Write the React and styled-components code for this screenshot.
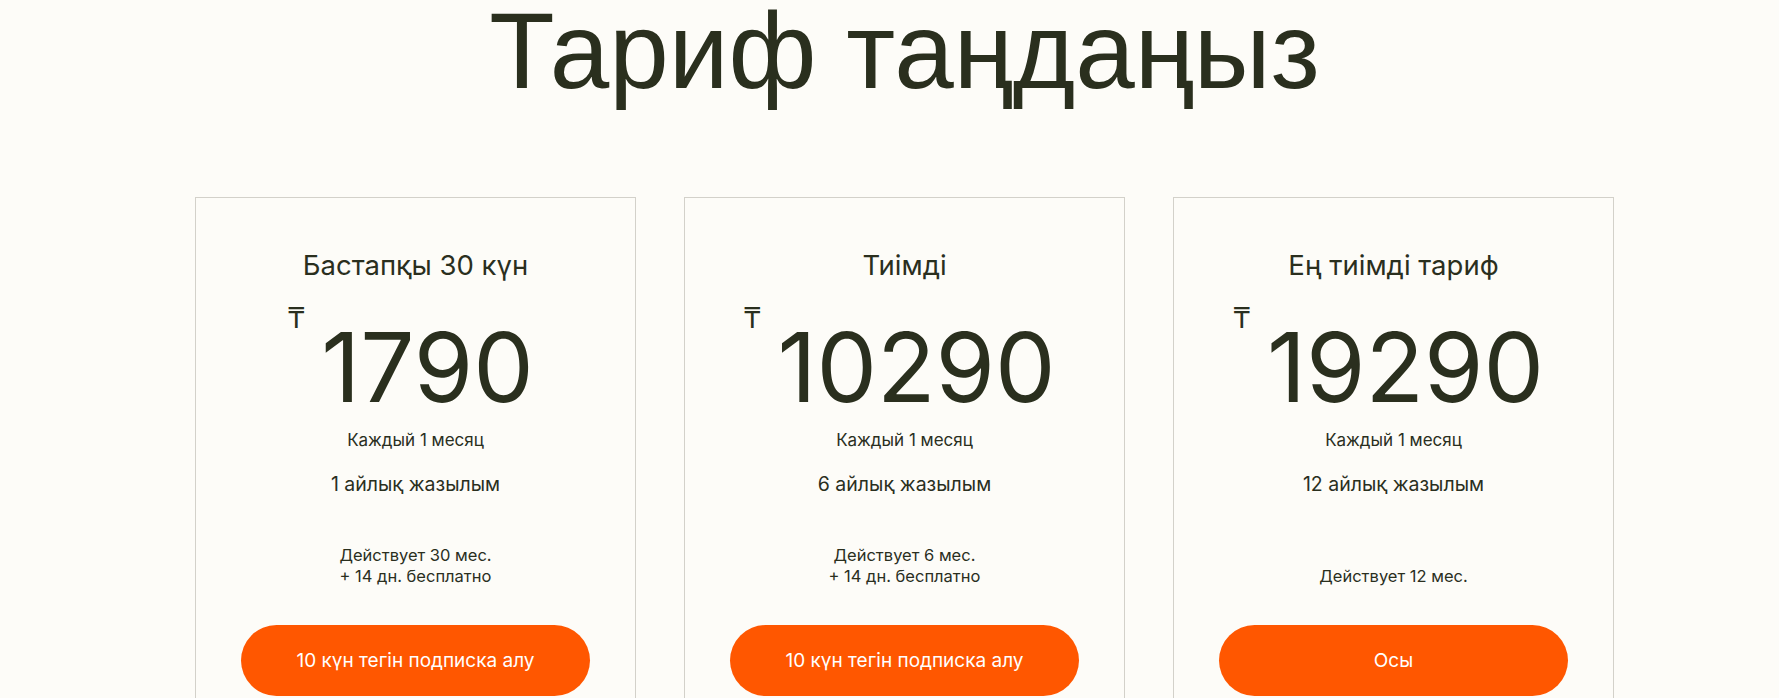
import React from 'react';
import styled, { createGlobalStyle } from 'styled-components';

const GlobalStyle = createGlobalStyle`
    html, body {
        margin: 0;
        padding: 0;
        background: #fdfcf8;
    }
    body {
        font-family: Inter, "Noto Sans", sans-serif;
        color: #2a2f1e;
        overflow: hidden;
    }
`;

const Page = styled.section`
    display: flex;
    flex-direction: column;
    align-items: center;
    height: 698px;
    padding-left: 30px;
    box-sizing: border-box;
    overflow: hidden;
`;

const Heading = styled.h1`
    margin: -14px 0 0;
    font-family: "Liberation Sans", Arial, sans-serif;
    font-weight: 400;
    font-size: 107px;
    line-height: 130px;
    color: #2a2f1e;
`;

const CardRow = styled.div`
    display: grid;
    grid-template-columns: repeat(3, 441px);
    gap: 48px;
    margin-top: 81px;
`;

const Card = styled.article`
    display: flex;
    flex-direction: column;
    align-items: center;
    border: 1px solid #d3d1ca;
    padding: 49px 0 40px;
    text-align: center;
`;

const PlanName = styled.h2`
    margin: 0;
    font-size: 27.5px;
    font-weight: 400;
    line-height: 36px;
`;

const PriceRow = styled.div`
    display: flex;
    align-items: flex-start;
    margin-top: 21px;
    margin-left: -10px;
`;

const Currency = styled.span`
    font-size: 28px;
    line-height: 28px;
    margin-right: 16px;
`;

const Amount = styled.span`
    font-size: 96px;
    line-height: 96px;
    margin-top: 15px;
`;

const Period = styled.p`
    margin: 13px 0 0;
    font-size: 17px;
    line-height: 24px;
`;

const Duration = styled.p`
    margin: 19px 0 0;
    font-size: 19.5px;
    line-height: 26px;
`;

const Notes = styled.div`
    display: flex;
    flex-direction: column;
    justify-content: flex-end;
    height: 42px;
    margin-top: 47.5px;
    font-size: 16.5px;
    line-height: 21px;
`;

const ActionButton = styled.button`
    margin-top: 38.5px;
    width: 349px;
    height: 71px;
    border: none;
    border-radius: 36px;
    background: #ff5700;
    color: #ffffff;
    font-family: Inter, "Noto Sans", sans-serif;
    font-size: 19px;
    cursor: pointer;
`;

const plans = [
    {
        name: 'Бастапқы 30 күн',
        price: '1790',
        months: '1 айлық жазылым',
        notes: ['Действует 30 мес.', '+ 14 дн. бесплатно'],
        action: '10 күн тегін подписка алу',
    },
    {
        name: 'Тиімді',
        price: '10290',
        months: '6 айлық жазылым',
        notes: ['Действует 6 мес.', '+ 14 дн. бесплатно'],
        action: '10 күн тегін подписка алу',
    },
    {
        name: 'Ең тиімді тариф',
        price: '19290',
        months: '12 айлық жазылым',
        notes: ['Действует 12 мес.'],
        action: 'Осы',
    },
];

const App = () => (
    <Page>
        <GlobalStyle />
        <Heading>Тариф таңдаңыз</Heading>
        <CardRow>
            {plans.map((plan) => (
                <Card key={plan.price}>
                    <PlanName>{plan.name}</PlanName>
                    <PriceRow>
                        <Currency>₸</Currency>
                        <Amount>{plan.price}</Amount>
                    </PriceRow>
                    <Period>Каждый 1 месяц</Period>
                    <Duration>{plan.months}</Duration>
                    <Notes>
                        {plan.notes.map((line) => (
                            <span key={line}>{line}</span>
                        ))}
                    </Notes>
                    <ActionButton>{plan.action}</ActionButton>
                </Card>
            ))}
        </CardRow>
    </Page>
);

export default App;
